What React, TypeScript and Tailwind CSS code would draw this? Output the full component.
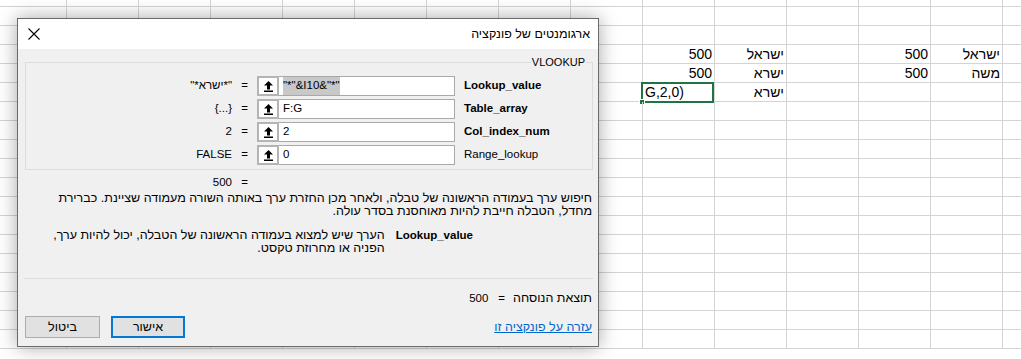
import { FC } from 'react'

const ROWS = 19
const COLS = 15

type Cell = { text: string; align?: 'left' | 'right' }

const sheetData: Record<string, Cell> = {
  '3-9': { text: '500' },
  '3-10': { text: 'ישראל' },
  '3-12': { text: '500' },
  '3-13': { text: 'ישראל' },
  '4-9': { text: '500' },
  '4-10': { text: 'ישרא' },
  '4-12': { text: '500' },
  '4-13': { text: 'משה' },
  '5-9': { text: 'G,2,0)', align: 'left' },
  '5-10': { text: 'ישרא' },
}

const Sheet: FC = () => (
  <div className="flex flex-col">
    {Array.from({ length: ROWS }, (_, r) => (
      <div key={r} className={`flex ${r === 0 ? 'h-[7px]' : 'h-[19px]'}`}>
        {Array.from({ length: COLS }, (_, c) => {
          const cell = sheetData[`${r}-${c}`]
          const selected = r === 5 && c === 9
          return (
            <div
              key={c}
              className={`relative shrink-0 border-r border-b border-[#d4d4d4] ${
                c === 0 ? 'w-[67px]' : 'w-[72px]'
              }`}
            >
              {cell && (
                <div
                  className={`flex h-full items-end pb-[1px] text-[14px] leading-[16px] text-black ${
                    cell.align === 'left' ? 'justify-start pl-[2px]' : 'justify-end pr-[2px]'
                  }`}
                >
                  {cell.text}
                </div>
              )}
              {selected && (
                <div className="absolute left-[-2px] top-[-1px] h-[21px] w-[73px] border-2 border-[#217346]">
                  <div className="absolute bottom-[-4px] left-[-4px] h-[6px] w-[6px] border border-white bg-[#217346]" />
                </div>
              )}
            </div>
          )
        })}
      </div>
    ))}
  </div>
)

const RefIcon: FC = () => (
  <svg width="11" height="13" viewBox="0 0 11 13">
    <path d="M5.5 1 L10 5.5 L7 5.5 L7 9.5 L4 9.5 L4 5.5 L1 5.5 Z" fill="#000" />
    <rect x="1" y="10.5" width="9" height="1.5" fill="#000" />
  </svg>
)

interface ArgRowProps {
  value: string
  input: string
  label: string
  bold?: boolean
  selected?: boolean
}

const ArgRow: FC<ArgRowProps> = ({ value, input, label, bold, selected }) => (
  <div className="flex h-[20px] items-center">
    <div dir="rtl" className="w-[206px] text-right whitespace-nowrap">
      {value}
    </div>
    <div className="w-[25px] text-center">=</div>
    <div className="flex h-[20px] w-[22px] items-center justify-center border-2 border-[#b4b4b4] bg-white">
      <RefIcon />
    </div>
    <div className="flex h-[20px] w-[176px] items-center border border-l-0 border-[#a9a9a9] bg-white pl-[4px] whitespace-nowrap">
      {selected ? <span className="bg-[#c8c8c8]">{input}</span> : input}
    </div>
    <div className={`ml-[9px] whitespace-nowrap text-[11.5px] ${bold ? 'font-bold' : ''}`}>{label}</div>
  </div>
)

const Dialog: FC = () => (
  <div
    dir="rtl"
    className="absolute left-[17px] top-[18px] flex h-[329px] w-[582px] flex-col border border-[#6b6b6b] bg-[#f0f0f0] text-[12.5px] text-black shadow-[0_0_18px_rgba(0,0,0,0.35)]"
    style={{ fontFamily: '"Liberation Sans", "DejaVu Sans", sans-serif' }}
  >
    <div className="flex h-[30px] items-center justify-between bg-white pr-[8px] pl-[10px]">
      <span>ארגומנטים של פונקציה</span>
      <svg width="12" height="12" viewBox="0 0 12 12">
        <path d="M0.5 0.5 L11.5 11.5 M11.5 0.5 L0.5 11.5" stroke="#000" strokeWidth="1.1" />
      </svg>
    </div>

    <div className="relative mt-[13px] mr-[5px] ml-[7px] border border-[#dcdcdc] pt-[13px] pb-[4px]">
      <span className="absolute top-[-8px] right-[6px] bg-[#f0f0f0] px-[1px] text-[11px] leading-[14px]">
        VLOOKUP
      </span>
      <div dir="ltr" className="flex flex-col gap-[3px] text-[11.5px]">
        <ArgRow value={'"*ישרא*"'} input={'"*"&I10&"*"'} label="Lookup_value" bold selected />
        <ArgRow value="{...}" input="F:G" label="Table_array" bold />
        <ArgRow value="2" input="2" label="Col_index_num" bold />
        <ArgRow value="FALSE" input="0" label="Range_lookup" />
      </div>
    </div>

    <div dir="ltr" className="mt-[5px] flex h-[14px] items-center text-[11.5px] leading-[14px]">
      <div className="w-[214px] text-right">500</div>
      <div className="w-[25px] text-center">=</div>
    </div>

    <div className="mt-[3px] pr-[6px] leading-[13px] whitespace-nowrap">
      חיפוש ערך בעמודה הראשונה של טבלה, ולאחר מכן החזרת ערך באותה השורה מעמודה שציינת. כברירת
      <br />
      מחדל, הטבלה חייבת להיות מאוחסנת בסדר עולה.
    </div>

    <div className="mt-[11px] flex pr-[125px] leading-[13px]">
      <div className="text-[11.5px] font-bold whitespace-nowrap" dir="ltr">
        Lookup_value
      </div>
      <div className="mr-[11px] whitespace-nowrap">
        הערך שיש למצוא בעמודה הראשונה של הטבלה, יכול להיות ערך,
        <br />
        הפניה או מחרוזת טקסט.
      </div>
    </div>

    <div className="mt-[23px] mr-[5px] ml-[6px] h-px bg-[#dcdcdc]" />

    <div className="mt-[12px] flex h-[14px] items-center pr-[6px] leading-[14px]">
      <span>תוצאת הנוסחה</span>
      <span className="mr-[8px] text-[11.5px]">=</span>
      <span className="mr-[10px] text-[11.5px]">500</span>
    </div>

    <div className="mt-[11px] flex items-center justify-between pr-[6px] pl-[7px]">
      <a className="cursor-pointer text-[#0066cc] underline">עזרה על פונקציה זו</a>
      <div className="flex gap-[11px]">
        <button className="h-[22px] w-[74px] border-2 border-[#0078d7] bg-[#e1e1e1]">אישור</button>
        <button className="h-[22px] w-[75px] border border-[#adadad] bg-[#e1e1e1]">ביטול</button>
      </div>
    </div>
  </div>
)

export default function App() {
  return (
    <div
      className="relative h-[359px] w-[1021px] overflow-hidden bg-white"
      style={{ fontFamily: '"Liberation Sans", Arial, sans-serif' }}
    >
      <Sheet />
      <Dialog />
    </div>
  )
}
